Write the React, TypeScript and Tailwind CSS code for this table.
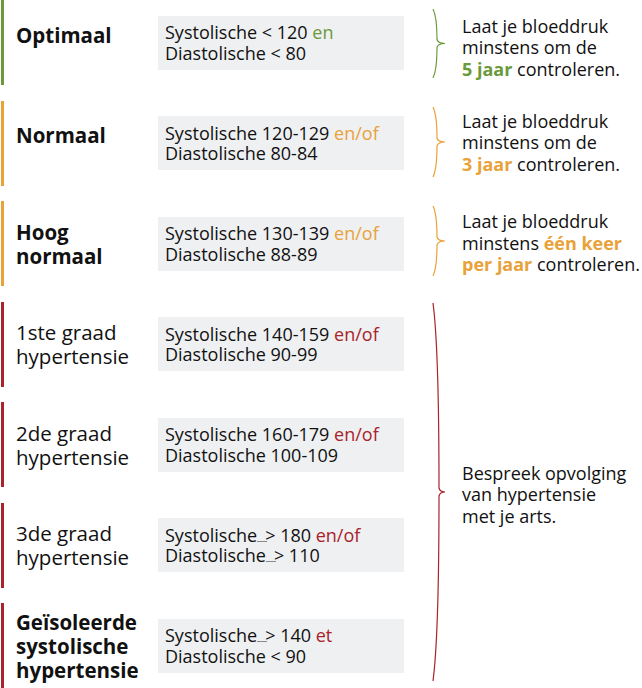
import React from 'react';

type Tone = 'green' | 'orange' | 'red';

const toneText: Record<Tone, string> = {
  green: 'text-[#6a9a3c]',
  orange: 'text-[#e8a23a]',
  red: 'text-[#a8232b]',
};

const toneBar: Record<Tone, string> = {
  green: 'bg-[#6a9a3c]',
  orange: 'bg-[#e8a23a]',
  red: 'bg-[#a8232b]',
};

const toneStroke: Record<Tone, string> = {
  green: '#6a9a3c',
  orange: '#e8a23a',
  red: '#a8232b',
};

// "groter dan of gelijk aan" zoals in de bron: streepje + >
const Geq = () => (
  <>
    <span className="inline-block w-[10px] h-px bg-[#8a8a8a] align-baseline" />
    <span className="-ml-[2px]">&gt;</span>
  </>
);

interface Row {
  label: React.ReactNode;
  bold: boolean;
  single?: boolean;
  tone: Tone;
  sys: React.ReactNode;
  dia: React.ReactNode;
  joiner: string;
}

const rows: Row[] = [
  { label: 'Optimaal', bold: true, single: true, tone: 'green', sys: <>Systolische &lt; 120</>, joiner: 'en', dia: <>Diastolische &lt; 80</> },
  { label: 'Normaal', bold: true, single: true, tone: 'orange', sys: <>Systolische 120-129</>, joiner: 'en/of', dia: <>Diastolische 80-84</> },
  { label: <>Hoog<br />normaal</>, bold: true, tone: 'orange', sys: <>Systolische 130-139</>, joiner: 'en/of', dia: <>Diastolische 88-89</> },
  { label: <>1ste graad<br />hypertensie</>, bold: false, tone: 'red', sys: <>Systolische 140-159</>, joiner: 'en/of', dia: <>Diastolische 90-99</> },
  { label: <>2de graad<br />hypertensie</>, bold: false, tone: 'red', sys: <>Systolische 160-179</>, joiner: 'en/of', dia: <>Diastolische 100-109</> },
  { label: <>3de graad<br />hypertensie</>, bold: false, tone: 'red', sys: <>Systolische<Geq /> 180</>, joiner: 'en/of', dia: <>Diastolische<Geq /> 110</> },
  { label: <>Geïsoleerde<br />systolische<br />hypertensie</>, bold: true, tone: 'red', sys: <>Systolische<Geq /> 140</>, joiner: 'et', dia: <>Diastolische &lt; 90</> },
];

const rowStart = ['row-start-1', 'row-start-2', 'row-start-3', 'row-start-4', 'row-start-5', 'row-start-6', 'row-start-7'];

// accolade die naar rechts wijst
const Brace = ({ h, tone, body = 5 }: { h: number; tone: Tone; body?: number }) => {
  const m = h / 2;
  const d = `M1,0 Q${body},${h * 0.12} ${body},${m - 4} Q${body + 1},${m} 13,${m} Q${body + 1},${m} ${body},${m + 4} Q${body},${h * 0.88} 1,${h}`;
  return (
    <svg width="16" height={h} viewBox={`0 0 16 ${h}`} className="block">
      <path d={d} fill="none" stroke={toneStroke[tone]} strokeWidth="1.2" />
    </svg>
  );
};

const advice = [
  { tone: 'green' as Tone, strong: '5 jaar', pre: 'minstens om de', shift: 'pt-[11px]' },
  { tone: 'orange' as Tone, strong: '3 jaar', pre: 'minstens om de', shift: '' },
];

export default function App() {
  return (
    <div
      className="w-[642px] h-[688px] bg-white text-[#111] pl-[1px] grid grid-cols-[3px_154px_246px_28px_16px_14px_180px] grid-rows-[repeat(7,85px)] gap-y-[15.5px]"
      style={{ fontFamily: '"Open Sans", "Noto Sans", sans-serif' }}
    >
      {rows.map((r, i) => (
        <React.Fragment key={i}>
          <div className={`${rowStart[i]} col-start-1 ${toneBar[r.tone]}`} />
          <div
            className={`${rowStart[i]} col-start-2 pl-[12px] flex items-center text-[20.5px] leading-[24px] ${
              r.bold ? 'font-bold' : 'font-normal'
            } ${r.single ? 'pb-[16px]' : ''}`}
          >
            <div>{r.label}</div>
          </div>
          <div className={`${rowStart[i]} col-start-3 flex items-center`}>
            <div className="w-full h-[54px] bg-[#eff0f2] pl-[7px] flex flex-col justify-center text-[18px] leading-[20.5px] whitespace-nowrap">
              <div>
                {r.sys} <span className={toneText[r.tone]}>{r.joiner}</span>
              </div>
              <div>{r.dia}</div>
            </div>
          </div>
        </React.Fragment>
      ))}

      {/* accolades per categorie */}
      <div className="row-start-1 col-start-5 pt-[9px]">
        <Brace h={69} tone="green" />
      </div>
      <div className="row-start-2 col-start-5 pt-[6px]">
        <Brace h={70} tone="orange" />
      </div>
      <div className="row-start-3 col-start-5 pt-[5px]">
        <Brace h={70} tone="orange" />
      </div>
      <div className="row-start-4 row-span-4 col-start-5 pt-[1px]">
        <Brace h={378} tone="red" body={7} />
      </div>

      {/* advies */}
      {advice.map((a, i) => (
        <div key={i} className={`${rowStart[i]} col-start-7 flex items-center ${a.shift} text-[18px] leading-[21.5px] whitespace-nowrap`}>
          <div>
            Laat je bloeddruk
            <br />
            {a.pre}
            <br />
            <span className={`font-bold ${toneText[a.tone]}`}>{a.strong}</span> controleren.
          </div>
        </div>
      ))}
      <div className="row-start-3 col-start-7 flex items-center text-[18px] leading-[21.5px] whitespace-nowrap">
        <div>
          Laat je bloeddruk
          <br />
          minstens <span className="font-bold text-[#e8a23a]">één keer</span>
          <br />
          <span className="font-bold text-[#e8a23a]">per jaar</span> controleren.
        </div>
      </div>
      <div className="row-start-4 row-span-4 col-start-7 flex items-center text-[18px] leading-[21.5px] whitespace-nowrap">
        <div>
          Bespreek opvolging
          <br />
          van hypertensie
          <br />
          met je arts.
        </div>
      </div>
    </div>
  );
}
